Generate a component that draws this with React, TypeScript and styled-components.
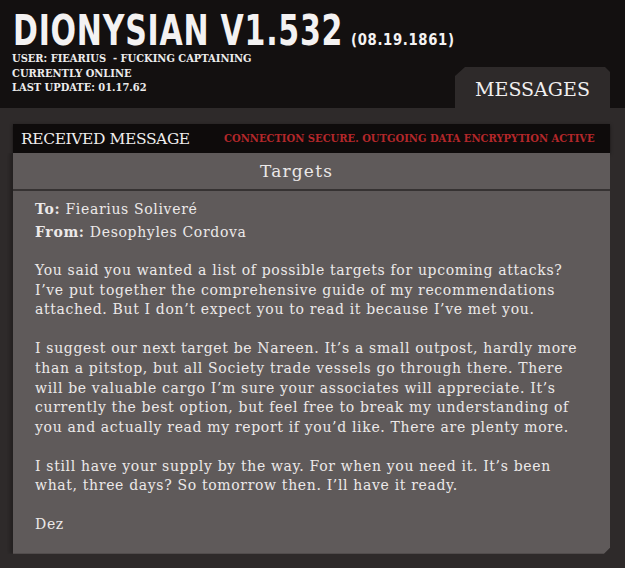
import React from 'react'
import styled, { createGlobalStyle } from 'styled-components'

const GlobalStyle = createGlobalStyle`
  html, body {
    margin: 0;
    padding: 0;
    background: #2e2a2a;
  }
`

const Page = styled.div`
  width: 625px;
  min-height: 568px;
  background: #2e2a2a;
  overflow: hidden;
`

const Header = styled.header`
  height: 108px;
  background: #131010;
  display: flex;
  justify-content: space-between;
  align-items: flex-end;
  padding: 0 15px 0 12px;
  box-sizing: border-box;
`

const TitleBlock = styled.div`
  flex: 1;
  min-width: 0;
  align-self: flex-start;
  padding-top: 8px;
`

const TitleRow = styled.div`
  display: flex;
  align-items: baseline;
  height: 44px;
  white-space: nowrap;
`

const Title = styled.h1`
  margin: 0 -88px 0 1px;
  font-family: "DejaVu Sans Condensed", "DejaVu Sans", sans-serif;
  font-weight: bold;
  font-size: 43px;
  line-height: 44px;
  letter-spacing: 1px;
  color: #f4f2f2;
  transform: scaleX(0.775);
  transform-origin: left;
`

const Stamp = styled.span`
  font-family: "DejaVu Sans Condensed", "DejaVu Sans", sans-serif;
  font-weight: bold;
  font-size: 16px;
  letter-spacing: 0.7px;
  color: #f4f2f2;
  display: inline-block;
  transform: scaleX(0.92);
  transform-origin: left;
`

const Meta = styled.div`
  font-family: "DejaVu Serif Condensed", "DejaVu Serif", serif;
  font-weight: bold;
  font-size: 11px;
  line-height: 14.5px;
  color: #ecebeb;
  white-space: pre;
`

const Tab = styled.div`
  flex-shrink: 0;
  width: 155px;
  height: 41px;
  background: #2e2a2a;
  clip-path: polygon(10px 0, 150px 0, 155px 5px, 155px 100%, 0 100%, 0 9px);
  display: flex;
  align-items: center;
  justify-content: center;
  font-family: "DejaVu Serif", serif;
  font-size: 19px;
  color: #f1efef;
  padding-top: 2px;
  box-sizing: border-box;
`

const Main = styled.main`
  padding: 16px 15px 15px 13px;
`

const Bar = styled.div`
  height: 29px;
  background: #0e0b0b;
  display: flex;
  align-items: center;
  padding: 0 8px;
  white-space: nowrap;
  overflow: hidden;
  box-shadow: 0 1px 3px rgba(0, 0, 0, 0.5);
`

const BarTitle = styled.span`
  flex-shrink: 0;
  width: 203px;
  font-family: "DejaVu Serif", serif;
  font-size: 15.5px;
  color: #efeded;
  letter-spacing: -0.4px;
`

const BarStatus = styled.span`
  flex-shrink: 0;
  font-family: "DejaVu Serif Condensed", "DejaVu Serif", serif;
  font-weight: bold;
  font-size: 11.1px;
  color: #b3272a;
`

const Panel = styled.section`
  background: #5f5a5a;
  box-shadow: -3px 0 4px rgba(0, 0, 0, 0.25);
  clip-path: polygon(-6px 0, 100% 0, 100% calc(100% - 6px), calc(100% - 6px) 100%, -6px 100%);
`

const PanelHead = styled.h2`
  margin: 0;
  height: 36px;
  padding-right: 30px;
  border-bottom: 2px solid #363232;
  display: flex;
  align-items: center;
  justify-content: center;
  font-family: "DejaVu Serif", serif;
  font-weight: normal;
  font-size: 17px;
  letter-spacing: 1.2px;
  color: #ebe8e8;
`

const Body = styled.div`
  padding: 7px 10px 19px 22px;
  font-family: "DejaVu Serif", serif;
  font-size: 14px;
  letter-spacing: 0.66px;
  color: #ece9e9;
`

const AddressLine = styled.div`
  line-height: 23px;
  white-space: pre;
  b {
    font-weight: bold;
  }
`

const Para = styled.p<{ $first?: boolean }>`
  margin: ${p => (p.$first ? '17px' : '19px')} 0 0;
  line-height: 19.7px;
  white-space: pre;
`

const paragraphs = [
  `You said you wanted a list of possible targets for upcoming attacks?
I’ve put together the comprehensive guide of my recommendations
attached. But I don’t expect you to read it because I’ve met you.`,
  `I suggest our next target be Nareen. It’s a small outpost, hardly more
than a pitstop, but all Society trade vessels go through there. There
will be valuable cargo I’m sure your associates will appreciate. It’s
currently the best option, but feel free to break my understanding of
you and actually read my report if you’d like. There are plenty more.`,
  `I still have your supply by the way. For when you need it. It’s been
what, three days? So tomorrow then. I’ll have it ready.`,
  `Dez`,
]

export default function App() {
  return (
    <Page>
      <GlobalStyle />
      <Header>
        <TitleBlock>
          <TitleRow>
            <Title>DIONYSIAN V1.532</Title>
            <Stamp>(08.19.1861)</Stamp>
          </TitleRow>
          <Meta>{`USER: FIEARIUS  - FUCKING CAPTAINING
CURRENTLY ONLINE
LAST UPDATE: 01.17.62`}</Meta>
        </TitleBlock>
        <Tab>MESSAGES</Tab>
      </Header>
      <Main>
        <Bar>
          <BarTitle>RECEIVED MESSAGE</BarTitle>
          <BarStatus>CONNECTION SECURE. OUTGOING DATA ENCRYPYTION ACTIVE</BarStatus>
        </Bar>
        <Panel>
          <PanelHead>Targets</PanelHead>
          <Body>
            <AddressLine>
              <b>To:</b> Fiearius Soliveré
            </AddressLine>
            <AddressLine>
              <b>From:</b> Desophyles Cordova
            </AddressLine>
            {paragraphs.map((text, i) => (
              <Para key={i} $first={i === 0}>
                {text}
              </Para>
            ))}
          </Body>
        </Panel>
      </Main>
    </Page>
  )
}
